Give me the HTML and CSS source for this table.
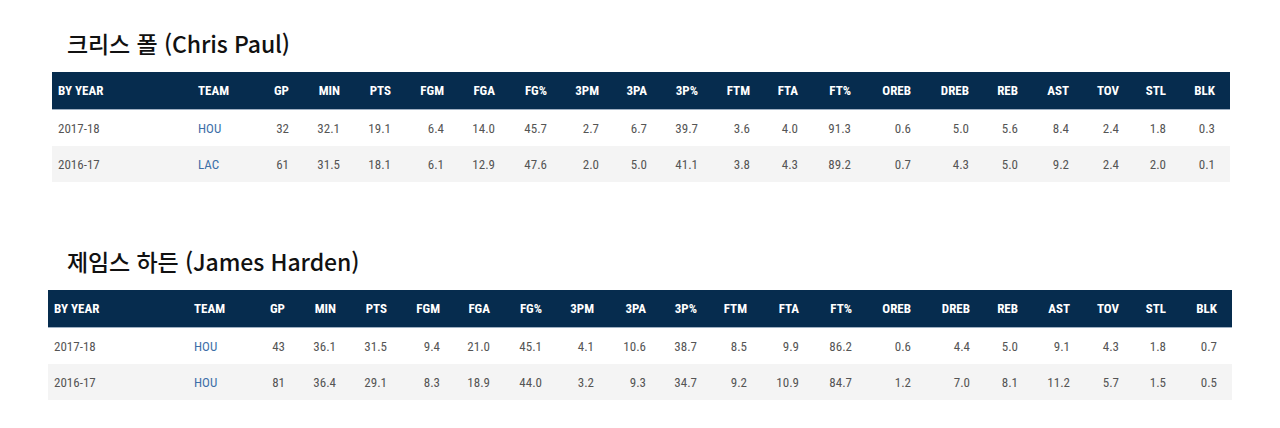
FILE: index.html
```html
<!DOCTYPE html>
<html lang="ko">
<head>
<meta charset="utf-8">
<title>Stats</title>
<link rel="stylesheet" href="styles.css">
</head>
<body>
<main class="page">
  <section class="player player-cp">
    <h2 class="player-name">크리스 폴 (Chris Paul)</h2>
    <table class="stats">
      <colgroup>
        <col><col><col><col><col><col><col><col><col><col><col><col><col><col><col><col><col><col><col><col><col>
      </colgroup>
      <thead>
        <tr>
          <th class="left">BY YEAR</th><th class="left">TEAM</th><th>GP</th><th>MIN</th><th>PTS</th><th>FGM</th><th>FGA</th><th>FG%</th><th>3PM</th><th>3PA</th><th>3P%</th><th>FTM</th><th>FTA</th><th>FT%</th><th>OREB</th><th>DREB</th><th>REB</th><th>AST</th><th>TOV</th><th>STL</th><th>BLK</th>
        </tr>
      </thead>
      <tbody>
        <tr>
          <td class="left">2017-18</td><td class="left team">HOU</td><td>32</td><td>32.1</td><td>19.1</td><td>6.4</td><td>14.0</td><td>45.7</td><td>2.7</td><td>6.7</td><td>39.7</td><td>3.6</td><td>4.0</td><td>91.3</td><td>0.6</td><td>5.0</td><td>5.6</td><td>8.4</td><td>2.4</td><td>1.8</td><td>0.3</td>
        </tr>
        <tr>
          <td class="left">2016-17</td><td class="left team">LAC</td><td>61</td><td>31.5</td><td>18.1</td><td>6.1</td><td>12.9</td><td>47.6</td><td>2.0</td><td>5.0</td><td>41.1</td><td>3.8</td><td>4.3</td><td>89.2</td><td>0.7</td><td>4.3</td><td>5.0</td><td>9.2</td><td>2.4</td><td>2.0</td><td>0.1</td>
        </tr>
      </tbody>
    </table>
  </section>

  <section class="player player-jh">
    <h2 class="player-name">제임스 하든 (James Harden)</h2>
    <table class="stats">
      <colgroup>
        <col><col><col><col><col><col><col><col><col><col><col><col><col><col><col><col><col><col><col><col><col>
      </colgroup>
      <thead>
        <tr>
          <th class="left">BY YEAR</th><th class="left">TEAM</th><th>GP</th><th>MIN</th><th>PTS</th><th>FGM</th><th>FGA</th><th>FG%</th><th>3PM</th><th>3PA</th><th>3P%</th><th>FTM</th><th>FTA</th><th>FT%</th><th>OREB</th><th>DREB</th><th>REB</th><th>AST</th><th>TOV</th><th>STL</th><th>BLK</th>
        </tr>
      </thead>
      <tbody>
        <tr>
          <td class="left">2017-18</td><td class="left team">HOU</td><td>43</td><td>36.1</td><td>31.5</td><td>9.4</td><td>21.0</td><td>45.1</td><td>4.1</td><td>10.6</td><td>38.7</td><td>8.5</td><td>9.9</td><td>86.2</td><td>0.6</td><td>4.4</td><td>5.0</td><td>9.1</td><td>4.3</td><td>1.8</td><td>0.7</td>
        </tr>
        <tr>
          <td class="left">2016-17</td><td class="left team">HOU</td><td>81</td><td>36.4</td><td>29.1</td><td>8.3</td><td>18.9</td><td>44.0</td><td>3.2</td><td>9.3</td><td>34.7</td><td>9.2</td><td>10.9</td><td>84.7</td><td>1.2</td><td>7.0</td><td>8.1</td><td>11.2</td><td>5.7</td><td>1.5</td><td>0.5</td>
        </tr>
      </tbody>
    </table>
  </section>
</main>
</body>
</html>
```

FILE: styles.css
```css
html, body {
  margin: 0;
  padding: 0;
  background: #ffffff;
}

.page {
  padding-top: 28px;
}

.player-cp {
  margin-left: 52px;
  width: 1178px;
}

.player-jh {
  margin-left: 48px;
  width: 1184px;
  margin-top: 64px;
}

.player-name {
  margin: 0 0 13px 0;
  font-family: "Noto Sans CJK KR", "Noto Sans", sans-serif;
  font-weight: 500;
  font-size: 23px;
  line-height: 31px;
  color: #111111;
  letter-spacing: -0.1px;
}

.player-cp .player-name { padding-left: 15px; }
.player-jh .player-name { padding-left: 19px; }

.stats {
  width: 100%;
  border-collapse: collapse;
  table-layout: fixed;
  font-family: Roboto, "Liberation Sans Narrow", "Liberation Sans", sans-serif;
  font-stretch: 75%;
}

.stats th {
  background: #062c4e;
  color: #ffffff;
  font-weight: 700;
  font-size: 13px;
  height: 37px;
  padding: 0 15px 0 0;
  text-align: right;
  border-bottom: 1px solid #9fb0c2;
  white-space: nowrap;
}

.stats td {
  height: 36px;
  padding: 0 15px 0 0;
  font-size: 13px;
  color: #555555;
  text-align: right;
  white-space: nowrap;
}

.stats .left {
  text-align: left;
  padding: 0 0 0 6px;
}

.stats .team {
  color: #3d6fa8;
}

.stats tbody tr:nth-child(2) td {
  background: #f4f4f4;
}

/* column widths: Chris Paul */
.player-cp col:nth-child(1) { width: 140px; }
.player-cp col:nth-child(2) { width: 61px; }
.player-cp col:nth-child(3) { width: 51px; }
.player-cp col:nth-child(4) { width: 51px; }
.player-cp col:nth-child(5) { width: 51px; }
.player-cp col:nth-child(6) { width: 53px; }
.player-cp col:nth-child(7) { width: 51px; }
.player-cp col:nth-child(8) { width: 52px; }
.player-cp col:nth-child(9) { width: 52px; }
.player-cp col:nth-child(10) { width: 48px; }
.player-cp col:nth-child(11) { width: 51px; }
.player-cp col:nth-child(12) { width: 52px; }
.player-cp col:nth-child(13) { width: 48px; }
.player-cp col:nth-child(14) { width: 53px; }
.player-cp col:nth-child(15) { width: 60px; }
.player-cp col:nth-child(16) { width: 58px; }
.player-cp col:nth-child(17) { width: 49px; }
.player-cp col:nth-child(18) { width: 51px; }
.player-cp col:nth-child(19) { width: 50px; }
.player-cp col:nth-child(20) { width: 47px; }
.player-cp col:nth-child(21) { width: 49px; }

/* column widths: James Harden */
.player-jh col:nth-child(1) { width: 140px; }
.player-jh col:nth-child(2) { width: 61px; }
.player-jh col:nth-child(3) { width: 51px; }
.player-jh col:nth-child(4) { width: 51px; }
.player-jh col:nth-child(5) { width: 51px; }
.player-jh col:nth-child(6) { width: 53px; }
.player-jh col:nth-child(7) { width: 50px; }
.player-jh col:nth-child(8) { width: 52px; }
.player-jh col:nth-child(9) { width: 52px; }
.player-jh col:nth-child(10) { width: 52px; }
.player-jh col:nth-child(11) { width: 51px; }
.player-jh col:nth-child(12) { width: 50px; }
.player-jh col:nth-child(13) { width: 52px; }
.player-jh col:nth-child(14) { width: 53px; }
.player-jh col:nth-child(15) { width: 59px; }
.player-jh col:nth-child(16) { width: 59px; }
.player-jh col:nth-child(17) { width: 48px; }
.player-jh col:nth-child(18) { width: 52px; }
.player-jh col:nth-child(19) { width: 49px; }
.player-jh col:nth-child(20) { width: 47px; }
.player-jh col:nth-child(21) { width: 51px; }
```
